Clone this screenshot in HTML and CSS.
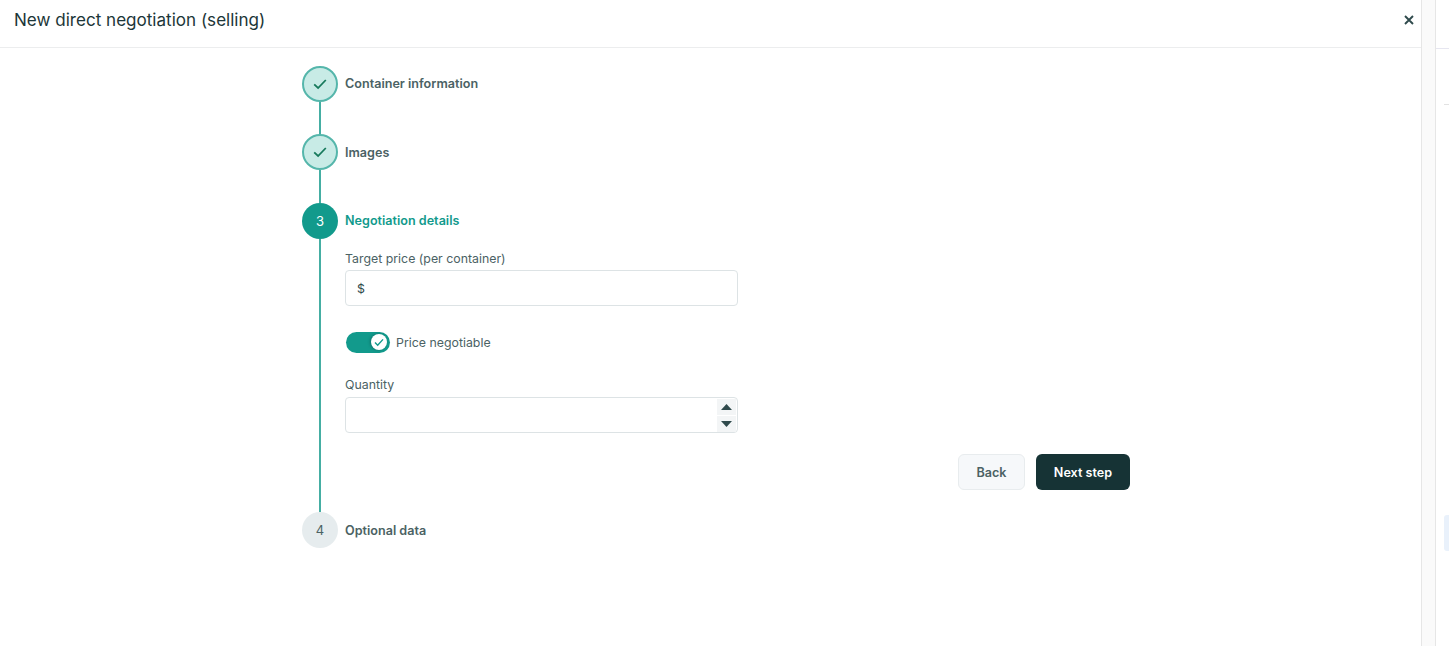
FILE: index.html
```html
<!DOCTYPE html>
<html lang="en">
<head>
<meta charset="utf-8">
<title>New direct negotiation (selling)</title>
<link rel="stylesheet" href="styles.css">
</head>
<body>
<div class="shell">
  <main class="modal">
    <header class="modal-header">
      <h1 class="modal-title">New direct negotiation (selling)</h1>
      <button class="close" aria-label="Close">
        <svg width="10" height="10" viewBox="0 0 10 10"><path d="M1 1l8 8M9 1l-8 8" stroke="#2f4a4c" stroke-width="1.9" fill="none"/></svg>
      </button>
    </header>
    <div class="stepper">
      <section class="step step-first">
        <div class="rail">
          <div class="dot dot-done"><svg width="14" height="12" viewBox="0 0 14 12"><path d="M1.2 6.3l3.9 3.7L12.8 2" stroke="#177a5c" stroke-width="1.8" fill="none"/></svg></div>
          <div class="line"></div>
        </div>
        <div class="step-body"><div class="step-title">Container information</div></div>
      </section>
      <section class="step step-second">
        <div class="rail">
          <div class="dot dot-done"><svg width="14" height="12" viewBox="0 0 14 12"><path d="M1.2 6.3l3.9 3.7L12.8 2" stroke="#177a5c" stroke-width="1.8" fill="none"/></svg></div>
          <div class="line"></div>
        </div>
        <div class="step-body"><div class="step-title title-low">Images</div></div>
      </section>
      <section class="step step-active">
        <div class="rail">
          <div class="dot dot-active">3</div>
          <div class="line"></div>
        </div>
        <div class="step-body">
          <div class="step-title title-active">Negotiation details</div>
          <label class="label label-first">Target price (per container)</label>
          <div class="input"><span class="prefix">$</span></div>
          <div class="toggle-row">
            <div class="toggle">
              <div class="knob"><svg width="10" height="9" viewBox="0 0 10 9"><path d="M1 4.6l2.7 2.7L9 1.4" stroke="#129a8c" stroke-width="1.4" fill="none"/></svg></div>
            </div>
            <span class="toggle-label">Price negotiable</span>
          </div>
          <label class="label label-second">Quantity</label>
          <div class="input input-number">
            <div class="spinner">
              <div class="spin"><svg width="11" height="6" viewBox="0 0 11 6"><path d="M5.5 0l5.5 6H0z" fill="#2f4a4c"/></svg></div>
              <div class="spin"><svg width="11" height="6" viewBox="0 0 11 6"><path d="M0 0h11L5.5 6z" fill="#2f4a4c"/></svg></div>
            </div>
          </div>
          <div class="actions">
            <button class="btn btn-back">Back</button>
            <button class="btn btn-next">Next step</button>
          </div>
        </div>
      </section>
      <section class="step">
        <div class="rail"><div class="dot dot-todo">4</div></div>
        <div class="step-body"><div class="step-title title-low">Optional data</div></div>
      </section>
    </div>
  </main>
  <div class="scrollbar"></div>
  <aside class="behind">
    <div class="behind-rule"></div>
    <div class="behind-tick"></div>
    <div class="behind-block"></div>
  </aside>
</div>
</body>
</html>
```
FILE: styles.css
```css
* { box-sizing: border-box; }
html, body { margin: 0; height: 100%; overflow: hidden; background: #fff; }
body { font-family: Inter, "Liberation Sans", sans-serif; color: #2f4a4c; }
.shell { display: flex; height: 646px; }
.modal { width: 1421px; flex: none; }
.modal-header { height: 48px; border-bottom: 1px solid #ecedee; display: flex; align-items: center; justify-content: space-between; padding: 0 16px 7px 14px; }
.modal-title { margin: 0; font-size: 17.07px; font-weight: 400; color: #1c3638; line-height: 26px; }
.close { border: 0; padding: 0; background: none; display: flex; margin-right: -9px; }
.close svg { display: block; }
.stepper { padding: 18px 0 0 302px; }
.step { display: flex; gap: 7px; }
.step-first { height: 68px; }
.step-second { height: 69px; }
.step-active { height: 309px; }
.rail { width: 36px; flex: none; display: flex; flex-direction: column; align-items: center; }
.line { flex: 1; width: 2px; background: #45aea3; }
.dot { width: 36px; height: 36px; flex: none; border-radius: 50%; display: flex; align-items: center; justify-content: center; font-size: 13px; }
.dot-done { background: #c8ebe6; border: 2px solid #55b6ab; }
.dot-active { background: #129a8c; color: #fff; }
.dot-todo { background: #e6ecee; color: #4b6264; }
.step-body { width: 785px; }
.step-title { font-size: 12.6px; font-weight: 600; line-height: 35px; color: #4b6264; }
.title-low { line-height: 37px; }
.title-active { color: #129a8c; }
.label { display: block; font-size: 12.35px; line-height: 16px; color: #4b6264; }
.label-first { margin-top: 13px; margin-bottom: 3px; }
.label-second { margin-top: 24px; margin-bottom: 4px; }
.input { width: 393px; height: 36px; border: 1px solid #dde3e5; border-radius: 4px; background: #fff; display: flex; align-items: center; padding: 0 11px; font-size: 12.35px; color: #2f4a4c; }
.input-number { justify-content: flex-end; padding: 0 1px 0 0; }
.spinner { display: flex; flex-direction: column; gap: 1px; }
.spin { width: 19px; height: 16px; background: #f3f5f6; display: flex; align-items: center; justify-content: center; }
.toggle-row { display: flex; align-items: center; gap: 6px; margin: 25px 0 0 1px; height: 22px; }
.toggle { width: 44px; height: 21px; border-radius: 11px; background: #129a8c; display: flex; align-items: center; justify-content: flex-end; padding-right: 3px; }
.knob { width: 16px; height: 16px; border-radius: 50%; background: #fff; display: flex; align-items: center; justify-content: center; box-shadow: -1px 0 3px rgba(0,0,0,.25); }
.toggle-label { font-size: 12.35px; color: #4b6264; }
.actions { display: flex; justify-content: flex-end; gap: 11px; margin-top: 21px; }
.btn { height: 36px; border-radius: 6px; font-family: inherit; font-size: 12.6px; font-weight: 600; padding: 0; }
.btn-back { width: 67px; background: #f6f8fa; border: 1px solid #e8ecee; color: #4b6264; }
.btn-next { width: 94px; background: #163335; border: 0; color: #fff; }
.scrollbar { width: 15px; flex: none; background: #fafafa; border-left: 1px solid #e6e6e6; border-right: 1px solid #e6e6e6; }
.behind { flex: 1; display: flex; flex-direction: column; align-items: flex-end; }
.behind-rule { width: 13px; height: 1px; background: #e6e6f0; margin-top: 48px; }
.behind-tick { width: 5px; height: 1px; background: #e2e2e2; margin-top: 55px; }
.behind-block { width: 5px; height: 36px; background: #e9f1fb; border-radius: 3px 0 0 3px; margin-top: 410px; }
```
